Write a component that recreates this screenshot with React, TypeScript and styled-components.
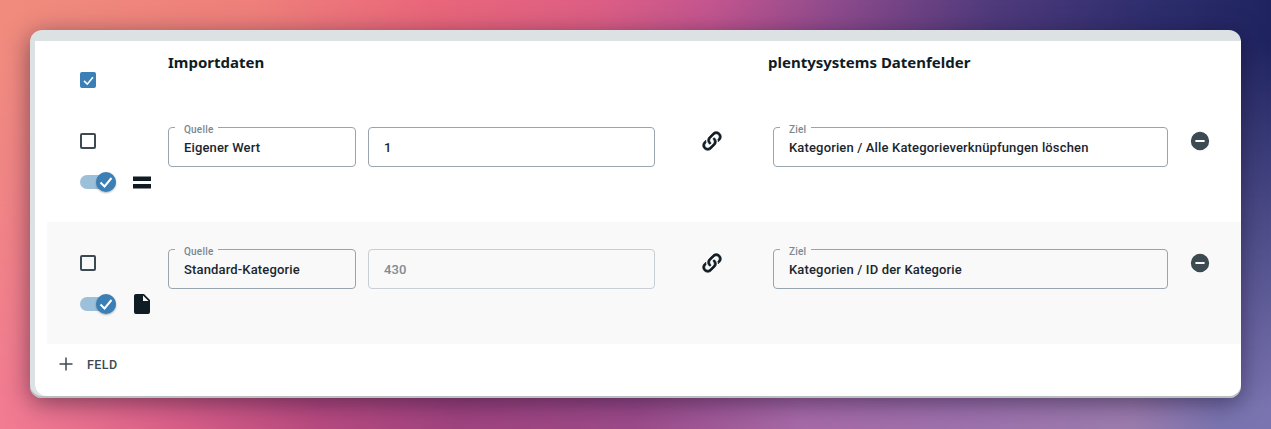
import React from "react";
import styled, { createGlobalStyle } from "styled-components";

const Global = createGlobalStyle`
  html, body { margin: 0; padding: 0; height: 100%; }
  body { font-family: "Roboto", "Liberation Sans", sans-serif; overflow: hidden; }
  #root { height: 100%; }
`;

const Page = styled.div`
  position: relative;
  box-sizing: border-box;
  width: 1271px;
  height: 429px;
  padding: 30px 30px 0;
  background: linear-gradient(90deg, #f27c92 0%, #ee7590 4%, #dc6089 13%, #b84a80 25%, #a0437f 36%, #9c4a8a 50%, #a76aa8 63%, #9e72ae 76%, #9c7cae 89%, #7a74b0 96%, #7a74b0 100%);
  &::before {
    content: "";
    position: absolute;
    inset: 0;
    background: linear-gradient(90deg, #f08c7e 0%, #ee7f7a 20%, #e9667a 34%, #dc5e84 47%, #c2558f 56%, #8c4a8c 66%, #4f3a7c 78%, #2f2e6e 90%, #1f2460 100%);
    mask-image: linear-gradient(180deg, #000 0%, #000 10%, transparent 95%);
  }
`;

const Card = styled.div`
  position: relative;
  box-sizing: border-box;
  width: 1211px;
  height: 368px;
  padding: 11px 0 2px 5px;
  border-radius: 12px;
  background: #dce1e3;
  box-shadow: inset 0 -2px 0 #b8bfbf, 0 5px 24px rgba(20, 10, 40, 0.5);
`;

const Inner = styled.div`
  height: 100%;
  padding-left: 12px;
  border-radius: 0 0 12px 12px;
  background: #fff;
  display: flex;
  flex-direction: column;
`;

const Head = styled.div`
  display: flex;
  height: 59px;
  padding-left: 33px;
`;

const HeadCheck = styled.div`
  width: 88px;
  padding-top: 31px;
`;

const HeadTitle = styled.div<{ $width: number }>`
  width: ${(p) => p.$width}px;
  padding-top: 11px;
  font-family: "Noto Sans", sans-serif;
  font-size: 15px;
  line-height: 20px;
  font-weight: 700;
  color: #101c24;
`;

const Row = styled.div<{ $shaded?: boolean }>`
  display: flex;
  box-sizing: border-box;
  height: 122px;
  padding: 27px 0 0 33px;
  background: ${(p) => (p.$shaded ? "#f9f9f9" : "#fff")};
`;

const Controls = styled.div`
  width: 88px;
  display: flex;
  flex-direction: column;
  padding-top: 6px;
  gap: 23px;
`;

const ToggleLine = styled.div`
  display: flex;
  align-items: center;
  height: 20px;
`;

const Box = styled.span<{ $checked?: boolean }>`
  box-sizing: border-box;
  display: flex;
  align-items: center;
  justify-content: center;
  width: 16px;
  height: 16px;
  border-radius: 2px;
  border: ${(p) => (p.$checked ? "0" : "2px solid #3c4a52")};
  background: ${(p) => (p.$checked ? "#3a7fb5" : "transparent")};
`;

const Toggle = styled.span`
  position: relative;
  display: block;
  width: 36px;
  height: 14px;
  margin-right: 14px;
  border-radius: 7px;
  background: #9dc0da;
`;

const Knob = styled.span`
  position: absolute;
  right: 0;
  top: -3px;
  display: flex;
  align-items: center;
  justify-content: center;
  width: 20px;
  height: 20px;
  border-radius: 50%;
  background: #3a7fb5;
  box-shadow: 0 1px 2px rgba(0, 0, 0, 0.3);
`;

const Slot = styled.span`
  display: flex;
  align-items: center;
  justify-content: center;
  width: 24px;
  height: 24px;
  color: #101c24;
`;

const Field = styled.div<{ $width: number; $gap?: number; $disabled?: boolean }>`
  position: relative;
  box-sizing: border-box;
  width: ${(p) => p.$width}px;
  height: 40px;
  margin-right: ${(p) => p.$gap ?? 0}px;
  padding-left: 15px;
  display: flex;
  align-items: center;
  border: 1px solid ${(p) => (p.$disabled ? "#c8ced3" : "#99a4ad")};
  border-radius: 4px;
  font-size: 13px;
  font-weight: 500;
  letter-spacing: 0.15px;
  color: ${(p) => (p.$disabled ? "#808b93" : "#1a262e")};
`;

const Legend = styled.span<{ $bg: string }>`
  position: absolute;
  left: 6px;
  top: -6px;
  padding: 0 5px 0 9px;
  font-size: 10px;
  line-height: 15px;
  letter-spacing: 0.2px;
  color: #7a8791;
  background: ${(p) => p.$bg};
`;

const LinkCell = styled.div`
  width: 118px;
  height: 28px;
  display: flex;
  align-items: center;
  justify-content: center;
  padding-right: 5px;
  box-sizing: border-box;
  color: #101c24;
`;

const RemoveCell = styled.div`
  width: 64px;
  height: 28px;
  display: flex;
  align-items: center;
  justify-content: center;
  color: #3c4a52;
`;

const AddRow = styled.div`
  display: flex;
  align-items: center;
  height: 40px;
  padding-left: 12px;
  gap: 14px;
  font-size: 12.5px;
  font-weight: 500;
  letter-spacing: 0.4px;
  color: #3c4a52;
`;

const Check = ({ size }: { size: number }) => (
  <svg width={size} height={size} viewBox="0 0 16 16" fill="none">
    <path d="M2.5 8.5 6.5 12.5 13.5 4" stroke="#fff" strokeWidth="2" />
  </svg>
);

const LinkIcon = () => (
  <svg width="24" height="24" viewBox="0 0 24 24" fill="currentColor" stroke="currentColor" strokeWidth="0.8">
    <path d="M10.59,13.41C11,13.8 11,14.44 10.59,14.83C10.2,15.22 9.56,15.22 9.17,14.83C7.22,12.88 7.22,9.71 9.17,7.76V7.76L12.71,4.22C14.66,2.27 17.83,2.27 19.78,4.22C21.73,6.17 21.73,9.34 19.78,11.29L18.29,12.78C18.3,11.96 18.17,11.14 17.89,10.36L18.36,9.88C19.54,8.71 19.54,6.81 18.36,5.64C17.19,4.46 15.29,4.46 14.12,5.64L10.59,9.17C9.41,10.34 9.41,12.24 10.59,13.41M13.41,9.17C13.8,8.78 14.44,8.78 14.83,9.17C16.78,11.12 16.78,14.29 14.83,16.24V16.24L11.29,19.78C9.34,21.73 6.17,21.73 4.22,19.78C2.27,17.83 2.27,14.66 4.22,12.71L5.71,11.22C5.7,12.04 5.83,12.86 6.11,13.65L5.64,14.12C4.46,15.29 4.46,17.19 5.64,18.36C6.81,19.54 8.71,19.54 9.88,18.36L13.41,14.83C14.59,13.66 14.59,11.76 13.41,10.59C13,10.2 13,9.56 13.41,9.17Z" />
  </svg>
);

const MinusIcon = () => (
  <svg width="22" height="22" viewBox="0 0 24 24" fill="currentColor">
    <path fillRule="evenodd" d="M17,13H7V11H17M12,2A10,10 0 0,0 2,12A10,10 0 0,0 12,22A10,10 0 0,0 22,12A10,10 0 0,0 12,2Z" />
  </svg>
);

const EqualIcon = () => (
  <svg width="18" height="13" viewBox="0 0 18 13" fill="currentColor">
    <rect x="0" y="0.5" width="18" height="4.5" />
    <rect x="0" y="8" width="18" height="4.5" />
  </svg>
);

const FileIcon = () => (
  <svg width="24" height="24" viewBox="0 0 24 24" fill="currentColor">
    <path fillRule="evenodd" d="M13,9V3.5L18.5,9M6,2C4.89,2 4,2.89 4,4V20A2,2 0 0,0 6,22H18A2,2 0 0,0 20,20V8L14,2H6Z" />
  </svg>
);

const PlusIcon = () => (
  <svg width="14" height="14" viewBox="0 0 14 14" fill="none" stroke="#3c4a52" strokeWidth="1.5">
    <path d="M7 0.5V13.5M0.5 7H13.5" />
  </svg>
);

type RowData = {
  source: string;
  value: string;
  target: string;
  disabled?: boolean;
  shaded?: boolean;
  icon: React.ReactNode;
};

const rows: RowData[] = [
  { source: "Eigener Wert", value: "1", target: "Kategorien / Alle Kategorieverknüpfungen löschen", icon: <EqualIcon /> },
  { source: "Standard-Kategorie", value: "430", target: "Kategorien / ID der Kategorie", disabled: true, shaded: true, icon: <FileIcon /> },
];

export default function App() {
  return (
    <Page>
      <Global />
      <Card>
        <Inner>
          <Head>
            <HeadCheck>
              <Box $checked>
                <Check size={13} />
              </Box>
            </HeadCheck>
            <HeadTitle $width={600}>Importdaten</HeadTitle>
            <HeadTitle $width={400}>plentysystems Datenfelder</HeadTitle>
          </Head>
          {rows.map((r) => {
            const bg = r.shaded ? "#f9f9f9" : "#fff";
            return (
              <Row key={r.source} $shaded={r.shaded}>
                <Controls>
                  <Box />
                  <ToggleLine>
                    <Toggle>
                      <Knob>
                        <Check size={16} />
                      </Knob>
                    </Toggle>
                    <Slot>{r.icon}</Slot>
                  </ToggleLine>
                </Controls>
                <Field $width={188} $gap={12}>
                  <Legend $bg={bg}>Quelle</Legend>
                  {r.source}
                </Field>
                <Field $width={287} $disabled={r.disabled}>
                  {r.value}
                </Field>
                <LinkCell>
                  <LinkIcon />
                </LinkCell>
                <Field $width={395}>
                  <Legend $bg={bg}>Ziel</Legend>
                  {r.target}
                </Field>
                <RemoveCell>
                  <MinusIcon />
                </RemoveCell>
              </Row>
            );
          })}
          <AddRow>
            <PlusIcon />
            FELD
          </AddRow>
        </Inner>
      </Card>
    </Page>
  );
}
